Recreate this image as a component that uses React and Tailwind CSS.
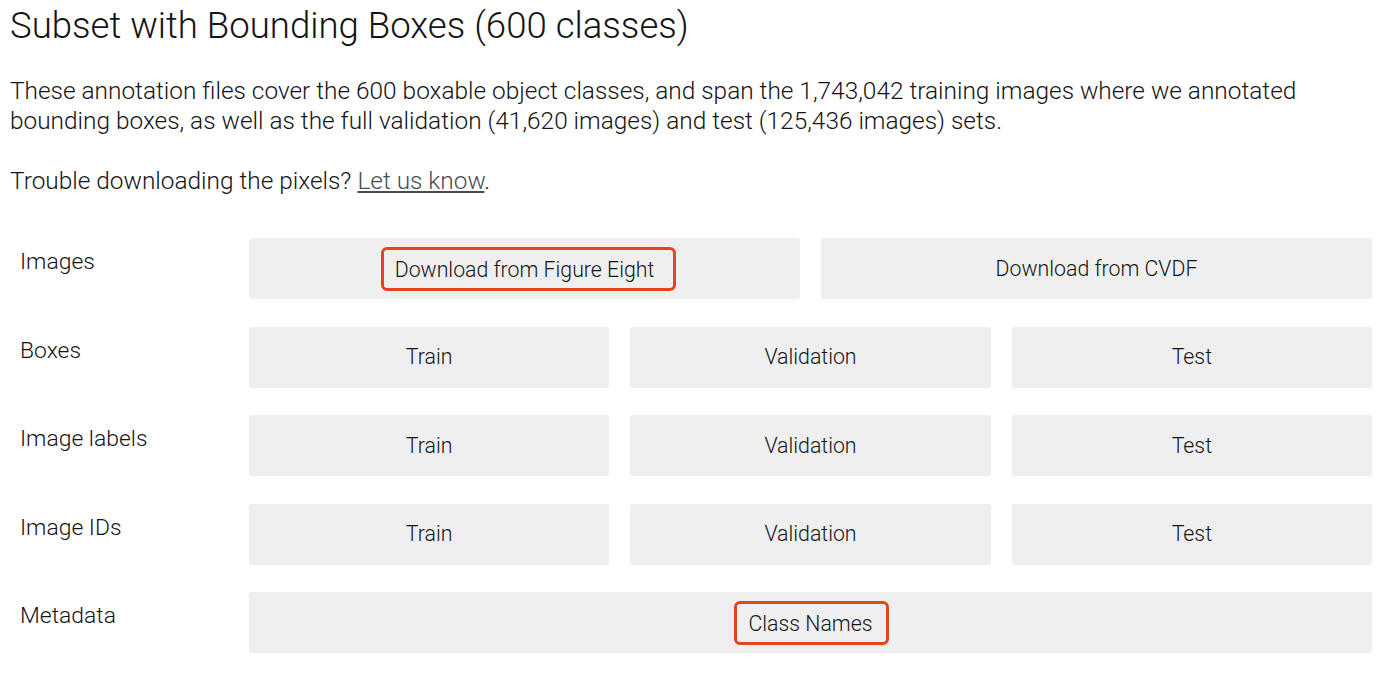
import React from 'react';

const rows = [
  { label: 'Images', items: [{ text: 'Download from Figure Eight', mark: 'wide' }, { text: 'Download from CVDF' }] },
  { label: 'Boxes', items: [{ text: 'Train' }, { text: 'Validation' }, { text: 'Test' }] },
  { label: 'Image labels', items: [{ text: 'Train' }, { text: 'Validation' }, { text: 'Test' }] },
  { label: 'Image IDs', items: [{ text: 'Train' }, { text: 'Validation' }, { text: 'Test' }] },
  { label: 'Metadata', items: [{ text: 'Class Names', mark: 'tight' }] },
];

const DownloadButton = ({ text, mark }) => (
  <div className="flex-1 h-[61px] bg-[#efefef] rounded-[3px] flex items-center justify-center text-[21.3px]">
    {mark ? (
      <span
        className={`border-[3px] border-[#e8431f] rounded-[6px] pt-[5px] pb-[4px] leading-[29px] ${
          mark === 'wide' ? 'pl-[11px] pr-[19px] ml-[8px]' : 'pl-[11px] pr-[13px] ml-[2px]'
        }`}
      >
        {text}
      </span>
    ) : (
      <span>{text}</span>
    )}
  </div>
);

export default function App() {
  return (
    <div className="bg-white w-[1400px] h-[687px] overflow-hidden text-[#141414] font-['Roboto',sans-serif] font-light">
      <div className="pl-[10px] pr-[28px]">
        <h1 className="text-[36.6px] leading-[52px] font-light">Subset with Bounding Boxes (600 classes)</h1>
        <p className="mt-[24px] text-[24.4px] leading-[30px]">
          These annotation files cover the 600 boxable object classes, and span the 1,743,042 training images where we annotated bounding boxes, as well as the full validation (41,620 images) and test (125,436 images) sets.
        </p>
        <p className="mt-[30px] text-[24.4px] leading-[30px]">
          Trouble downloading the pixels? <a href="#" className="underline text-[#474b55]">Let us know</a>.
        </p>
        <div className="mt-[42px] flex flex-col gap-[27.5px]">
          {rows.map((row) => (
            <div key={row.label} className="flex">
              <div className="w-[239px] pl-[10px] pt-[11px] leading-[26px] text-[22.9px]">{row.label}</div>
              <div className="flex-1 flex gap-[21px]">
                {row.items.map((it, i) => (
                  <DownloadButton key={i} {...it} />
                ))}
              </div>
            </div>
          ))}
        </div>
      </div>
    </div>
  );
}
